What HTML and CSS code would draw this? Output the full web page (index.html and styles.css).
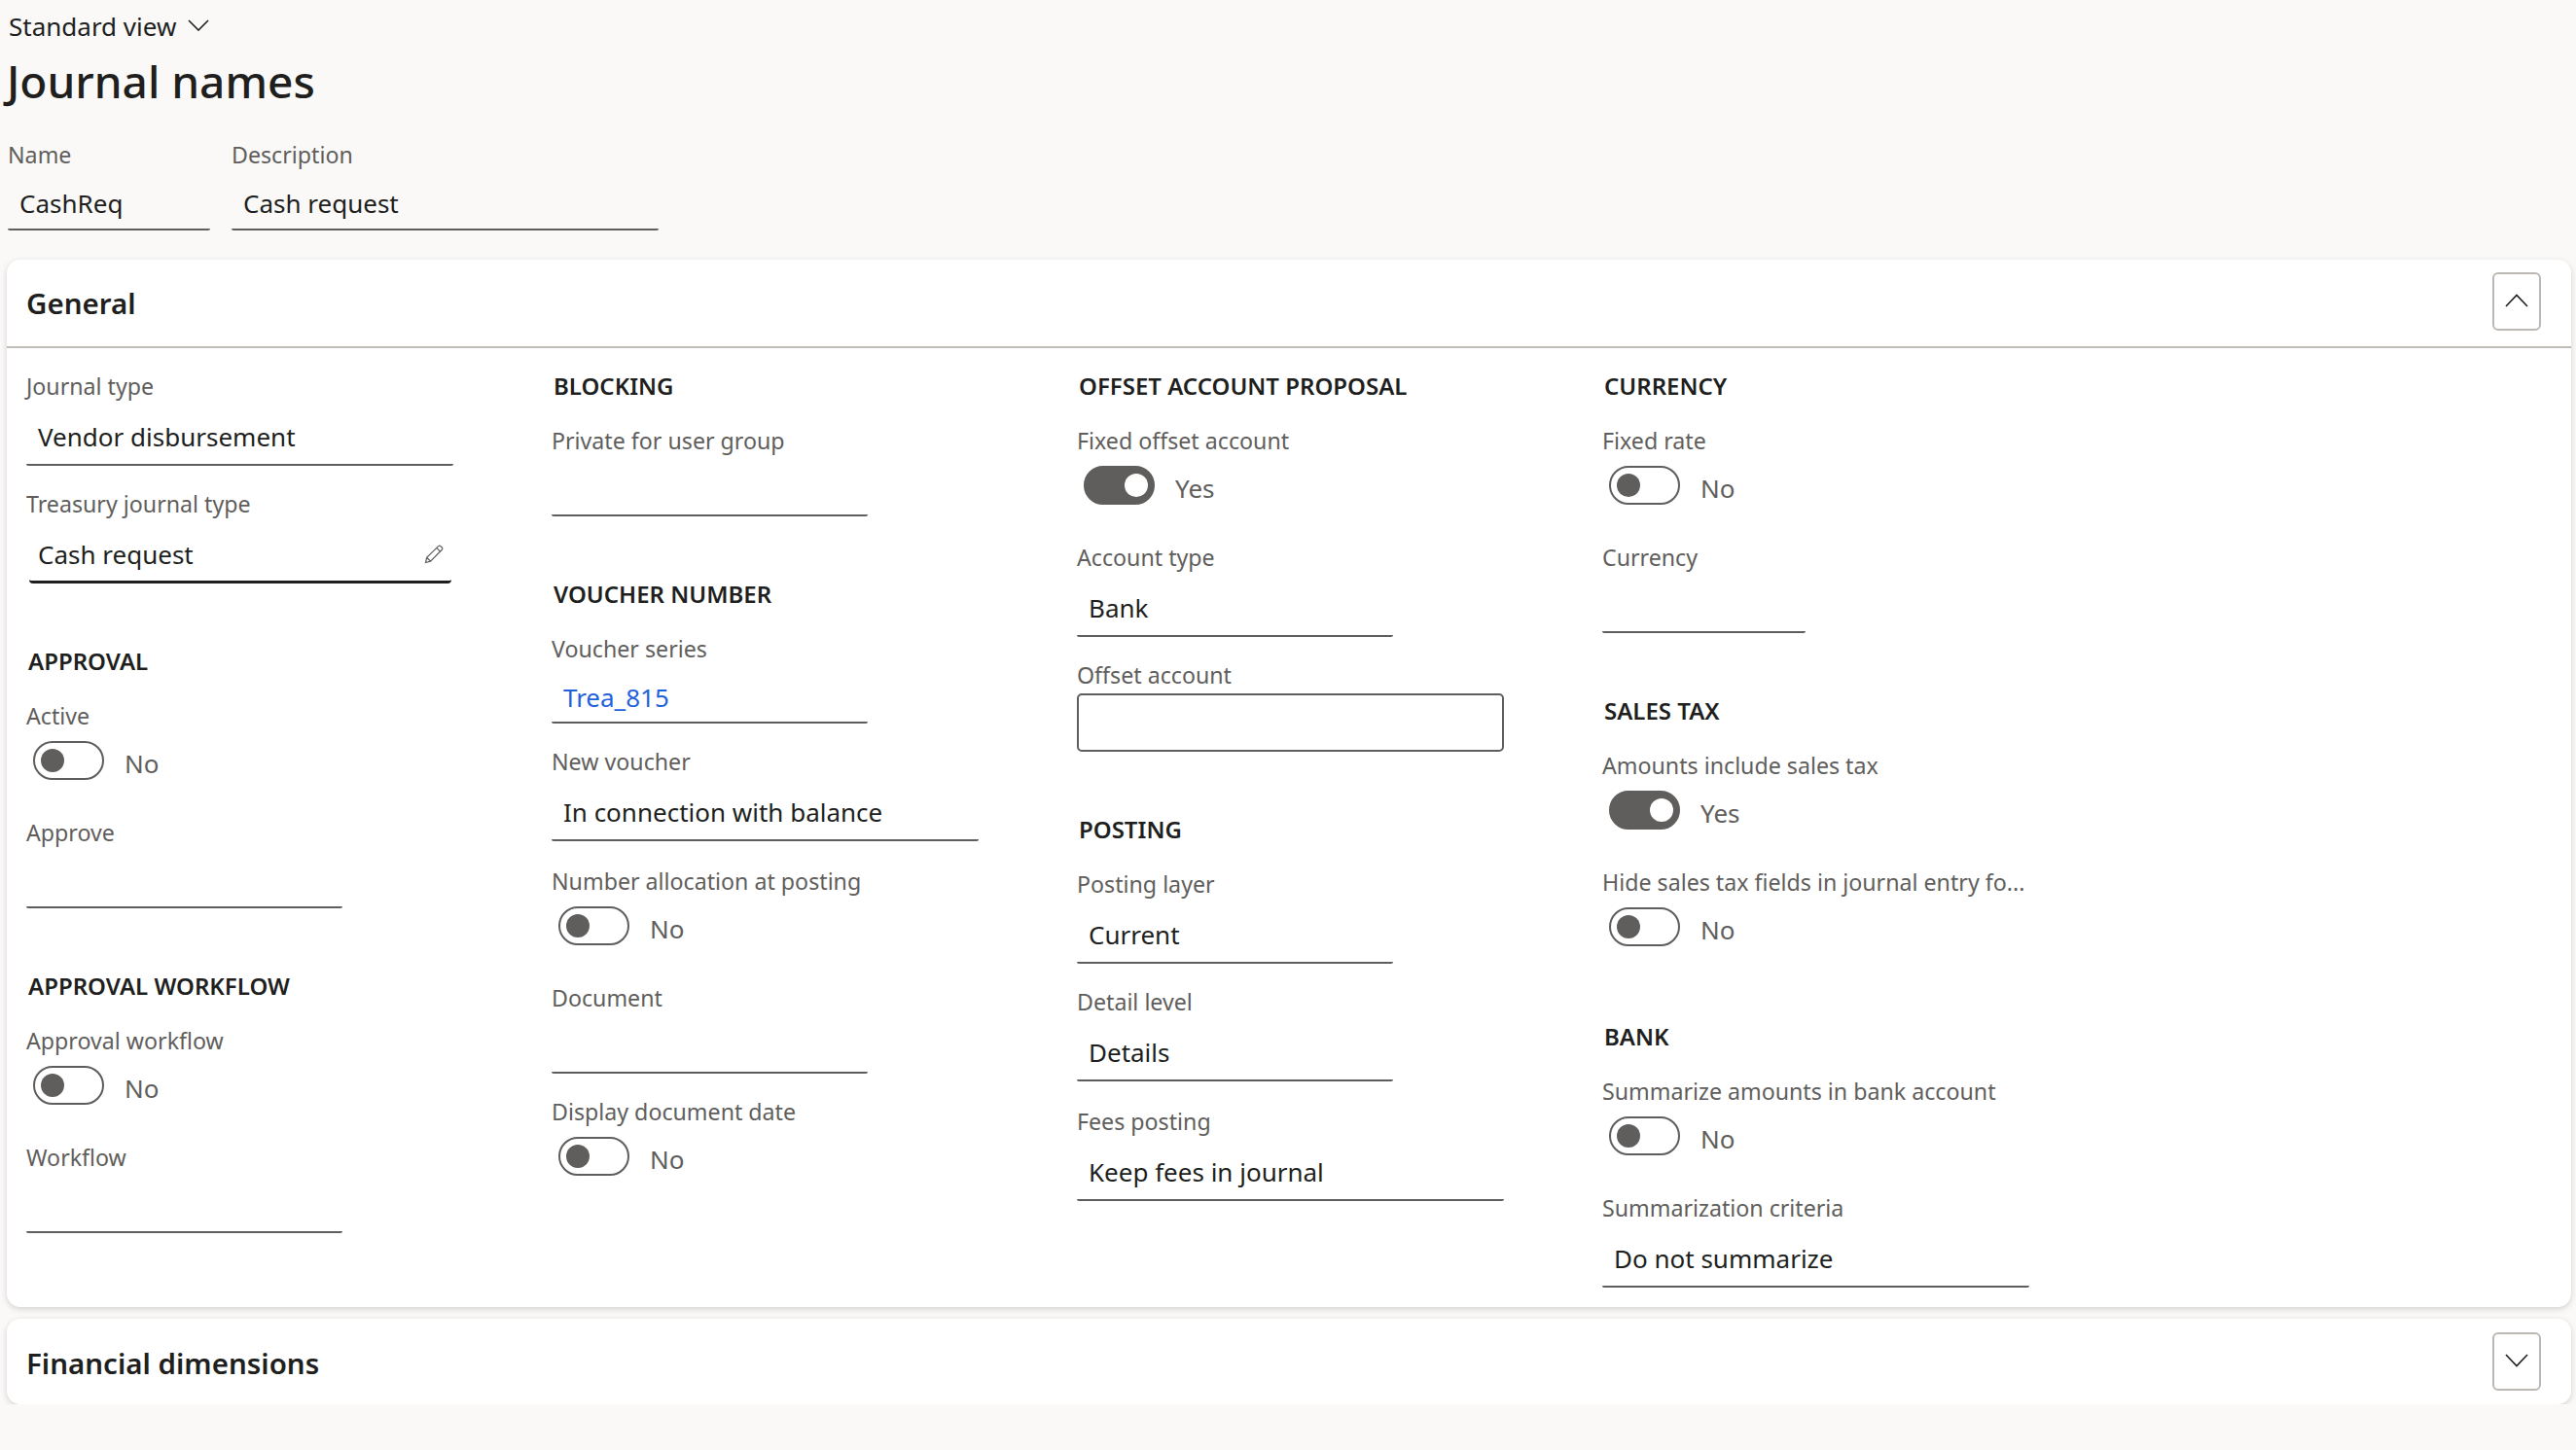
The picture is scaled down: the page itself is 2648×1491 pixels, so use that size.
FILE: index.html
```html
<!DOCTYPE html>
<html lang="en">
<head>
  <meta charset="UTF-8" />
  <title>Journal names</title>
  <link rel="stylesheet" href="styles.css">
</head>
<body>

  <header class="page-head">
    <div class="view-picker">
      <span>Standard view</span>
      <svg class="view-chevron" width="22" height="12" viewBox="0 0 22 12"><path d="M1 1l10 10L21 1" /></svg>
    </div>
    <h1>Journal names</h1>
    <div class="head-fields">
      <div class="head-field name-field">
        <div class="label">Name</div>
        <div class="control">CashReq</div>
      </div>
      <div class="head-field desc-field">
        <div class="label">Description</div>
        <div class="control">Cash request</div>
      </div>
    </div>
  </header>

  <section class="card">
    <div class="card-head open">
      <h2>General</h2>
      <button class="collapse">
        <svg width="24" height="14" viewBox="0 0 24 14"><path d="M1 13L12 1.5 23 13" /></svg>
      </button>
    </div>
    <div class="columns">

      <div class="col">
        <div class="field">
          <div class="label">Journal type</div>
          <div class="control">Vendor disbursement</div>
        </div>
        <div class="field">
          <div class="label">Treasury journal type</div>
          <div class="control focused">
            Cash request
            <svg class="pencil" width="20" height="20" viewBox="0 0 20 20"><path d="M1.5 18.5l1.2-5.2L14.6 1.6a1.6 1.6 0 0 1 2.3 0l1.4 1.4a1.6 1.6 0 0 1 0 2.3L6.5 17.2zM2.7 13.3l4 3.9M12.8 3.4l3.9 3.9" /></svg>
          </div>
        </div>
        <h3>APPROVAL</h3>
        <div class="field toggle-field">
          <div class="label">Active</div>
          <div class="toggle-row"><span class="toggle"></span><span class="toggle-text">No</span></div>
        </div>
        <div class="field">
          <div class="label">Approve</div>
          <div class="control empty short"></div>
        </div>
        <h3>APPROVAL WORKFLOW</h3>
        <div class="field toggle-field">
          <div class="label">Approval workflow</div>
          <div class="toggle-row"><span class="toggle"></span><span class="toggle-text">No</span></div>
        </div>
        <div class="field">
          <div class="label">Workflow</div>
          <div class="control empty short"></div>
        </div>
      </div>

      <div class="col">
        <h3>BLOCKING</h3>
        <div class="field">
          <div class="label">Private for user group</div>
          <div class="control empty short"></div>
        </div>
        <h3>VOUCHER NUMBER</h3>
        <div class="field">
          <div class="label">Voucher series</div>
          <div class="control short lookup"><a href="#">Trea_815</a></div>
        </div>
        <div class="field loose">
          <div class="label">New voucher</div>
          <div class="control">In connection with balance</div>
        </div>
        <div class="field toggle-field">
          <div class="label">Number allocation at posting</div>
          <div class="toggle-row"><span class="toggle"></span><span class="toggle-text">No</span></div>
        </div>
        <div class="field">
          <div class="label">Document</div>
          <div class="control empty short"></div>
        </div>
        <div class="field toggle-field">
          <div class="label">Display document date</div>
          <div class="toggle-row"><span class="toggle"></span><span class="toggle-text">No</span></div>
        </div>
      </div>

      <div class="col">
        <h3>OFFSET ACCOUNT PROPOSAL</h3>
        <div class="field toggle-field">
          <div class="label">Fixed offset account</div>
          <div class="toggle-row"><span class="toggle on"></span><span class="toggle-text">Yes</span></div>
        </div>
        <div class="field">
          <div class="label">Account type</div>
          <div class="control short">Bank</div>
        </div>
        <div class="field">
          <div class="label">Offset account</div>
          <div class="input-box"></div>
        </div>
        <h3>POSTING</h3>
        <div class="field">
          <div class="label">Posting layer</div>
          <div class="control short">Current</div>
        </div>
        <div class="field loose">
          <div class="label">Detail level</div>
          <div class="control short">Details</div>
        </div>
        <div class="field">
          <div class="label">Fees posting</div>
          <div class="control">Keep fees in journal</div>
        </div>
      </div>

      <div class="col">
        <h3>CURRENCY</h3>
        <div class="field toggle-field">
          <div class="label">Fixed rate</div>
          <div class="toggle-row"><span class="toggle"></span><span class="toggle-text">No</span></div>
        </div>
        <div class="field">
          <div class="label">Currency</div>
          <div class="control empty tiny"></div>
        </div>
        <h3>SALES TAX</h3>
        <div class="field toggle-field">
          <div class="label">Amounts include sales tax</div>
          <div class="toggle-row"><span class="toggle on"></span><span class="toggle-text">Yes</span></div>
        </div>
        <div class="field toggle-field">
          <div class="label">Hide sales tax fields in journal entry fo...</div>
          <div class="toggle-row"><span class="toggle"></span><span class="toggle-text">No</span></div>
        </div>
        <h3>BANK</h3>
        <div class="field toggle-field">
          <div class="label">Summarize amounts in bank account</div>
          <div class="toggle-row"><span class="toggle"></span><span class="toggle-text">No</span></div>
        </div>
        <div class="field">
          <div class="label">Summarization criteria</div>
          <div class="control">Do not summarize</div>
        </div>
      </div>

    </div>
  </section>

  <section class="card">
    <div class="card-head">
      <h2>Financial dimensions</h2>
      <button class="collapse">
        <svg width="24" height="14" viewBox="0 0 24 14"><path d="M1 1l11 11.5L23 1" /></svg>
      </button>
    </div>
  </section>

</body>
</html>
```

FILE: styles.css
```css
body {
  margin: 0;
  font-family: "Noto Sans", "Open Sans", sans-serif;
  background: #faf9f8;
  color: #201f1e;
  overflow: hidden;
}

svg {
  display: block;
  fill: none;
  stroke: #201f1e;
  stroke-width: 1.6;
}

.page-head {
  padding: 10px 0 0 8px;
}

.view-picker {
  display: flex;
  align-items: center;
  gap: 12px;
  height: 34px;
  padding-left: 1px;
  font-size: 26px;
}

.view-chevron {
  margin-top: -2px;
}

h1 {
  margin: 9px 0 0 -1px;
  height: 60px;
  font-size: 46px;
  line-height: 60px;
  font-weight: 500;
}

.head-fields {
  display: flex;
  gap: 22px;
  margin-top: 29px;
}

.name-field {
  width: 208px;
}

.desc-field {
  width: 439px;
}

.label {
  height: 34px;
  line-height: 34px;
  font-size: 23.2px;
  color: #605e5c;
  white-space: nowrap;
}

.control {
  position: relative;
  box-sizing: border-box;
  margin-top: 6px;
  height: 59px;
  padding-left: 12px;
  border-bottom: 2px solid #605e5c;
  border-radius: 0 0 2px 2px;
  line-height: 58px;
  font-size: 26px;
  white-space: nowrap;
}

.head-field .control {
  width: 100%;
  height: 55px;
  line-height: 54px;
}

.card {
  margin: 30px 5px 0 7px;
  background: #fff;
  border-radius: 14px;
  box-shadow: 0 2px 6px rgba(0, 0, 0, 0.16);
}

.card + .card {
  margin-top: 12px;
}

.card-head {
  display: flex;
  align-items: center;
  justify-content: space-between;
  box-sizing: border-box;
  height: 88px;
  padding: 0 31px 0 20px;
}

.card-head.open {
  height: 91px;
  padding-bottom: 3px;
  border-bottom: 2px solid #c0bcb8;
}

h2 {
  margin: 2px 0 0;
  font-size: 29.5px;
  font-weight: 600;
}

.collapse {
  display: flex;
  align-items: center;
  justify-content: center;
  box-sizing: border-box;
  width: 50px;
  height: 60px;
  padding: 0;
  background: #fff;
  border: 2px solid #bcb8b4;
  border-radius: 6px;
}

.collapse svg {
  margin-top: -2px;
}

.columns {
  display: grid;
  grid-template-columns: repeat(4, 540px);
  padding: 22px 0 0 20px;
}

h3 {
  margin: 0 0 22px;
  height: 34px;
  padding-left: 2px;
  line-height: 34px;
  font-size: 24px;
  font-weight: 600;
  color: #201f1e;
}

.field + h3 {
  margin-top: 41px;
}

.toggle-field + h3 {
  margin-top: 39px;
}

.field {
  width: 439px;
  padding-bottom: 22px;
}

.field.loose {
  padding-bottom: 24px;
}

.col:last-child .field:last-child {
  padding-bottom: 20px;
}

.control.focused {
  margin-left: 3px;
  width: 434px;
  padding-left: 9px;
  border-bottom: 3px solid #201f1e;
  border-radius: 0 0 4px 4px;
}

.pencil {
  position: absolute;
  top: 19px;
  right: 8px;
  stroke: #605e5c;
  stroke-width: 1.2;
}

.control.short {
  width: 325px;
}

.control.tiny {
  width: 209px;
}

.control.empty {
  height: 55px;
}

.control.lookup {
  height: 54px;
  line-height: 54px;
}

.control a {
  color: #1f62dc;
  text-decoration: none;
}

.input-box {
  box-sizing: border-box;
  margin-top: 2px;
  height: 60px;
  background: #fff;
  border: 2px solid #605e5c;
  border-radius: 5px;
}

.toggle-field {
  padding-bottom: 37px;
}

.toggle-row {
  display: flex;
  align-items: center;
  gap: 21px;
  margin: 9px 0 0 7px;
  height: 40px;
}

.toggle {
  position: relative;
  box-sizing: border-box;
  width: 73px;
  height: 40px;
  border: 2px solid #605e5c;
  border-radius: 20px;
}

.toggle::after {
  content: "";
  position: absolute;
  top: 6px;
  left: 6px;
  width: 24px;
  height: 24px;
  border-radius: 50%;
  background: #605e5c;
}

.toggle.on {
  background: #605e5c;
}

.toggle.on::after {
  left: auto;
  right: 5px;
  background: #fff;
}

.toggle-text {
  padding-top: 6px;
  font-size: 26px;
  color: #605e5c;
}
```
